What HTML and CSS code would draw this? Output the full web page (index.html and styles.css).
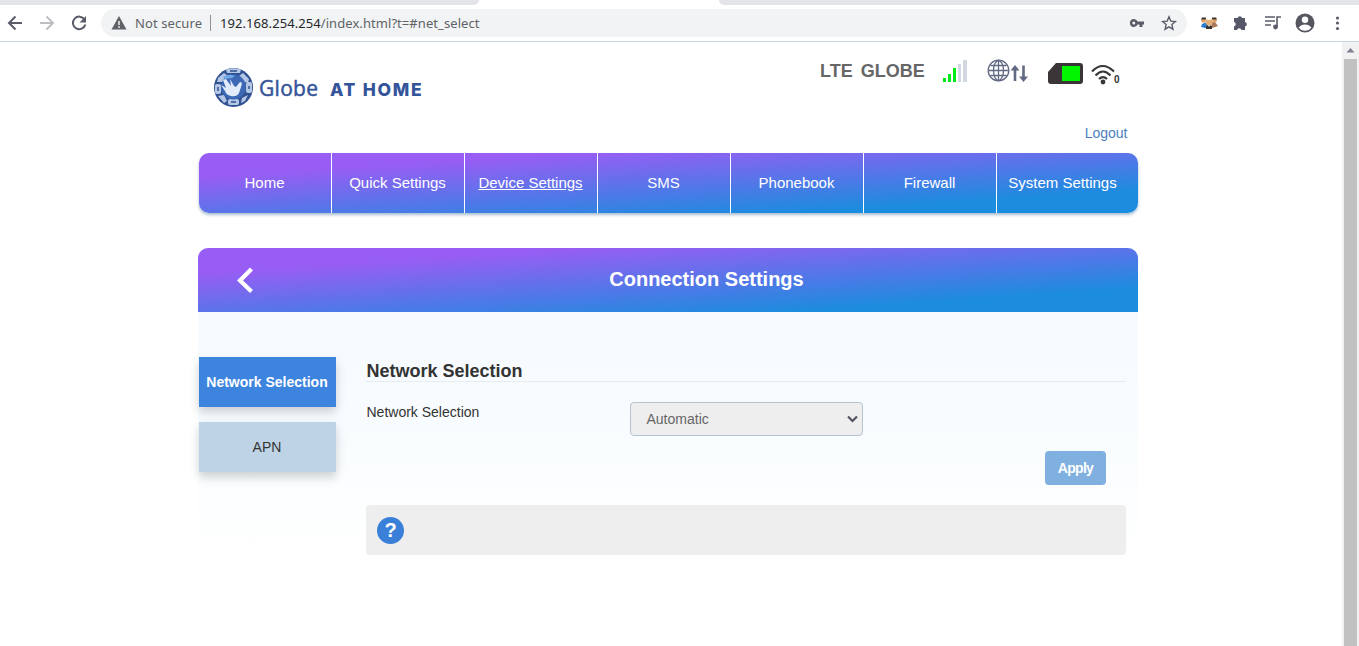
FILE: index.html
```
<!DOCTYPE html>
<html lang="en">
<head>
<meta charset="utf-8">
<title>Connection Settings</title>
<link rel="stylesheet" href="styles.css">
</head>
<body>
<div class="tabstrip"><span class="tabs-left"></span><span class="tabs-right"></span></div>
<div class="toolbar">
  <svg class="nav-icons" width="101" height="36" viewBox="0 0 101 36" fill="none" stroke-width="2">
    <path d="M22 18H9M15.500 11.500L9 18l6.500 6.500" stroke="#5a5c69"/>
    <path d="M40 18h13M46.500 11.500L53 18l-6.500 6.500" stroke="#bdbec2"/>
    <path d="M84.500 14.500A6.300 6.300 0 1 0 85.300 19.500" stroke="#5a5c69"/>
    <path d="M86 11v6.500h-6.500z" fill="#5a5c69"/>
  </svg>
  <div class="omnibox">
    <svg class="warn" width="16" height="14" viewBox="0 0 16 14"><path d="M8 0l7.500 13.500H.5z" fill="#5f6368"/><path d="M8 5v4M8 10.300v1.700" stroke="#f1f3f4" stroke-width="1.500"/></svg>
    <span class="secure">Not secure</span>
    <span class="sep"></span>
    <span class="url"><b>192.168.254.254</b>/index.html?t=#net_select</span>
    <svg class="box-icons" width="53" height="20" viewBox="0 0 53 20">
      <path d="M8.500 8.500A4 4 0 1 0 8.500 11.500H10.500V14H13.500V11.500H15V8.500zM4.800 8.500a1.500 1.500 0 1 1 0 3a1.500 1.500 0 1 1 0-3z" fill="#5a5c69" fill-rule="evenodd"/>
      <path d="M40 3.800l1.800 4.300 4.600.4-3.500 3.100 1 4.600-3.900-2.400-3.900 2.400 1-4.600-3.500-3.100 4.600-.4z" fill="none" stroke="#5a5c69" stroke-width="1.400"/>
    </svg>
  </div>
  <svg class="ext-icons" width="159" height="36" viewBox="0 0 159 36">
    <path d="M2 19l5-2 2 5-4 1-4-1z" fill="#287fd0"/><path d="M11 17h4l3 4-6 2z" fill="#a8775a"/>
    <circle cx="3.500" cy="15.500" r="2.300" fill="#dda46a"/><circle cx="14.500" cy="15.500" r="2.300" fill="#dda46a"/>
    <path d="M2 12.500h4v2H1zM12 12.500h4l1 2h-5z" fill="#43352d"/>
    <path d="M5.500 14l3 1 4-1v5l-3.500 3L6 19z" fill="#e3b076"/><path d="M6 21l3-1 3 1v3H6z" fill="#3b3430"/><path d="M8 20h2l-1 2z" fill="#fff"/>
    <path d="M34 13h3.500a2.400 2.400 0 0 1 4.600 0H45v4a2.300 2.300 0 0 1 0 4.500V25h-3.500a2.300 2.300 0 0 0-4.500 0h-3v-3.700a2.200 2.200 0 0 0 0-4.300z" fill="#56586a"/>
    <path d="M65 12h10M65 16h10M65 20h6M77 22V12h4" fill="none" stroke="#5a5c69" stroke-width="1.600"/><circle cx="75.500" cy="22" r="2.400" fill="#5a5c69"/>
    <circle cx="105" cy="18" r="9.500" fill="#55565f"/><circle cx="105" cy="14.800" r="3.200" fill="#fff"/><path d="M98.700 22.500q2.300-3 6.300-3t6.300 3q-2.300 3.300-6.300 3.300t-6.300-3.300z" fill="#fff"/>
    <g fill="#5a5c69"><circle cx="137.500" cy="13" r="1.600"/><circle cx="137.500" cy="18" r="1.600"/><circle cx="137.500" cy="23.500" r="1.600"/></g>
  </svg>
</div>
<div class="viewport">
  <main class="page">
    <header class="header">
      <div class="brand">
        <svg width="41" height="41" viewBox="0 0 41 41">
          <circle cx="20.500" cy="20.500" r="19.500" fill="#315292"/>
          <g fill="#b4c7e5"><path d="M13 2.500q7-2.500 15 0l-1 3.500H14z"/><path d="M5 11l6-5 4 3-6 6-5 0z"/><path d="M30 6l6 6-1 4-4-1-5-6z"/><rect x="2" y="17" width="6" height="10" rx="2"/><rect x="33" y="15" width="6" height="11" rx="2"/><path d="M5 29l6-1 3 6-3 2z"/><rect x="15" y="32" width="11" height="6" rx="2"/><path d="M29 31l6-3-3 6-4 2z"/></g>
          <circle cx="20.500" cy="20" r="12.500" fill="#3d68b5"/>
          <path d="M10 10q6-4 12-1l-3 2-7 1z" fill="#6fa6e4"/>
          <path d="M13 12l5 7-1-7 4 7 2 1 4-5q3 0 1 5l-2 6q-2 4-8 3-5-1-6-5l-4-6 5 3-3-8z" fill="#e1ebf9"/>
          <path d="M17 4h7M5 20v4M36 19v3M18 35h5" stroke="#315292" stroke-width="1.500"/>
        </svg>
        <span class="brand-name">Globe</span><span class="brand-home">AT HOME</span>
      </div>
      <div class="header-right">
        <div class="status">
          <span class="carrier">LTE&nbsp; GLOBE</span>
          <svg class="signal" width="25" height="24" viewBox="0 0 25 24"><path d="M0 19h3v4H0zM5 15h3v8H5zM10 9h3v14h-3z" fill="#00eb16"/><path d="M15 5h3v18h-3zM20 1h4v22h-4z" fill="#d2d8df"/></svg>
          <svg class="world" width="42" height="24" viewBox="0 0 42 24" fill="none" stroke="#626982" stroke-width="1.300"><circle cx="11.500" cy="11.500" r="10.300"/><ellipse cx="11.500" cy="11.500" rx="5" ry="10"/><path d="M11.500 1.500v20M1.500 11.500h20M3.500 6.500h16M3.500 16.500h16"/><path d="M28 22V8M36.500 6.500v13" stroke-width="2.600"/><path d="M23.500 11.500l4.500-5.500 4.500 5.500zM32 17.500l4.500 5.500 4.500-5.500z" fill="#626982" stroke="none"/></svg>
          <svg class="battery" width="36" height="22" viewBox="0 0 36 22"><path d="M8 0h24q3 0 3 3v15q0 3-3 3H3q-3 0-3-3V9z" fill="#3c3538"/><path d="M14 3h18v15H14z" fill="#00f500"/></svg>
          <svg class="wifi" width="24" height="21" viewBox="0 0 24 21" fill="none" stroke="#3a373b" stroke-width="2.200"><path d="M1 7.500q10.500-11 22 0M4.500 11.500q7.500-8 15 0M8 15q4-4 8 0"/><circle cx="12" cy="18" r="2.400" fill="#3a373b" stroke="none"/></svg>
          <span class="clients">0</span>
        </div>
        <a class="logout">Logout</a>
      </div>
    </header>
    <nav class="menu">
      <a>Home</a><a>Quick Settings</a><a class="current">Device Settings</a><a>SMS</a><a>Phonebook</a><a>Firewall</a><a>System Settings</a>
    </nav>
    <section class="panel">
      <div class="panel-head">
        <svg width="16" height="26" viewBox="0 0 16 26"><path d="M14.500 2L3 13.500l11.500 11" fill="none" stroke="#fff" stroke-width="4.200"/></svg>
        <h1>Connection Settings</h1>
      </div>
      <div class="panel-body">
        <aside class="side"><a class="side-item selected">Network Selection</a><a class="side-item">APN</a></aside>
        <div class="form">
          <h2>Network Selection</h2>
          <div class="row">
            <label>Network Selection</label>
            <div class="select"><span>Automatic</span><svg width="11" height="8" viewBox="0 0 11 8"><path d="M1 1.500l4.500 4.500L10 1.500" fill="none" stroke="#53545f" stroke-width="2.200"/></svg></div>
          </div>
          <div class="actions"><button class="apply">Apply</button></div>
          <div class="help"><span class="help-icon">?</span></div>
        </div>
      </div>
    </section>
  </main>
  <div class="scrollbar"><svg width="17" height="17" viewBox="0 0 17 17"><path d="M4.500 10.500h8l-4-4.500z" fill="#7d7e8f"/></svg><span class="thumb"></span></div>
</div>
</body>
</html>
```
FILE: styles.css
```
* { box-sizing: border-box; }
body { margin: 0; height: 646px; overflow: hidden; background: #fff; color: #333; font: 14px/20px "Liberation Sans", Arial, sans-serif; }
svg { display: block; flex: none; }
.tabstrip { height: 5px; display: flex; justify-content: space-between; }
.tabs-left { width: 479px; background: #e3e5e8; border-radius: 0 0 8px 0; }
.tabs-right { width: 640px; background: #e3e5e8; border-radius: 0 0 0 8px; }
.toolbar { height: 37px; display: flex; border-bottom: 1px solid #c8d5df; }
.omnibox { width: 1086px; height: 28px; margin-top: 4px; border-radius: 14px; background: #f1f3f4; display: flex; align-items: center; font: 13px/20px "Noto Sans", "Open Sans", sans-serif; color: #5f6368; }
.warn { margin: 0 8px 0 10px; }
.secure { width: 75px; white-space: nowrap; letter-spacing: .1px; }
.sep { width: 1px; height: 16px; background: #8f9398; }
.url { margin-left: 9px; flex: 1; letter-spacing: .07px; white-space: nowrap; }
.url b { font-weight: 400; color: #26282b; }
.box-icons { margin-right: 5px; }
.ext-icons { margin-left: 13px; }
.viewport { height: 604px; display: flex; justify-content: space-between; }
.page { margin-left: 198px; width: 940px; }
.header { height: 111px; display: flex; justify-content: space-between; }
.brand { display: flex; align-items: center; height: 41px; margin: 25px 0 0 15px; color: #34549a; white-space: nowrap; }
.brand-name { width: 71px; margin-left: 5px; font: 500 21px/30px "Open Sans", sans-serif; letter-spacing: .3px; -webkit-text-stroke: .5px #34549a; }
.brand-home { font: 800 17.5px/30px Inter, sans-serif; letter-spacing: 1.7px; margin-top: 4px; }
.header-right { display: flex; flex-direction: column; justify-content: space-between; align-items: flex-end; padding: 14px 10px 10px 0; }
.status { display: flex; height: 34px; margin-right: 8px; align-items: flex-start; }
.carrier { font: bold 18px/20px "Liberation Sans", Arial, sans-serif; color: #666; margin-top: 5px; letter-spacing: 0; word-spacing: -1px; width: 123px; white-space: nowrap; }
.signal { margin-top: 3px; }
.world { margin: 3px 0 0 19px; }
.battery { margin: 7px 0 0 19px; }
.wifi { margin: 8px 0 0 7px; }
.clients { font: bold 10px/12px "Liberation Sans", Arial, sans-serif; margin-top: 18px; margin-left: -1px; width: 6px; }
.logout { color: #4a7fbd; margin-right: .5px; }
.menu { height: 60px; margin-left: 1px; display: flex; border-radius: 10px; background: linear-gradient(to bottom right, #985df4 20%, #1b8cde 82%); box-shadow: 0 2px 3px rgba(85,125,165,.5); }
.menu a { width: 133px; padding-right: 1px; border-right: 1px solid #fff; color: #fff; font-size: 15px; line-height: 60px; text-align: center; }
.menu a:last-child { border: 0; padding-right: 2px; }
.menu .current { text-decoration: underline; }
.panel { margin-top: 35px; height: 312px; background: linear-gradient(#f5f9fd, #f8fcfe 55%, #fff); border-radius: 10px 10px 0 0; }
.panel-head { height: 64px; border-radius: 10px 10px 0 0; background: linear-gradient(to bottom right, #985df4 20%, #1b8cde 82%); display: flex; align-items: center; padding-left: 39px; color: #fff; }
.panel-head h1 { flex: 1; margin: 0; padding-right: 20px; padding-left: 42px; font-size: 20px; line-height: 24px; text-align: center; transform: translateY(-1px); }
.panel-body { display: flex; padding: 45px 0 0 1px; }
.side { width: 137px; display: grid; gap: 15px; align-content: start; }
.side-item { height: 50px; line-height: 50px; padding-right: 1px; text-align: center; background: #bfd3e6; box-shadow: 0 5px 9px rgba(60,65,75,.24); white-space: nowrap; }
.selected { background: #3d84df; color: #fff; font-weight: bold; }
.form { width: 760px; margin-left: 30px; }
.form h2 { margin: 0; padding-top: 2px; height: 25px; border-bottom: 1px solid #e5edf2; font-size: 18px; line-height: 24px; text-indent: .5px; }
.row { display: flex; padding-top: 20px; }
.row label { width: 264px; line-height: 20px; text-indent: .5px; }
.select { width: 233px; height: 34px; border: 1px solid #b5c3d0; border-radius: 4px; background: #eee; display: flex; align-items: center; justify-content: space-between; padding: 0 4px 0 15.500px; color: #666; }
.actions { display: flex; justify-content: flex-end; padding: 15px 20px 20px 0; }
.apply { width: 61px; height: 34px; padding: 0; border: 0; border-radius: 4px; background: #80b0df; color: #fff; font: bold 14px "Liberation Sans", Arial, sans-serif; letter-spacing: -.7px; }
.help { height: 50px; background: #eee; border-radius: 4px; padding: 12px 11px; }
.help-icon { display: block; width: 27px; height: 27px; border-radius: 50%; background: #3b80d8; color: #fff; text-align: center; font: bold 20px/26px "Liberation Sans", Arial, sans-serif; }
.scrollbar { width: 17px; background: #f1f1f1; }
.thumb { display: block; width: 13px; height: 587px; margin-left: 2px; background: #c1c1c1; }
```
